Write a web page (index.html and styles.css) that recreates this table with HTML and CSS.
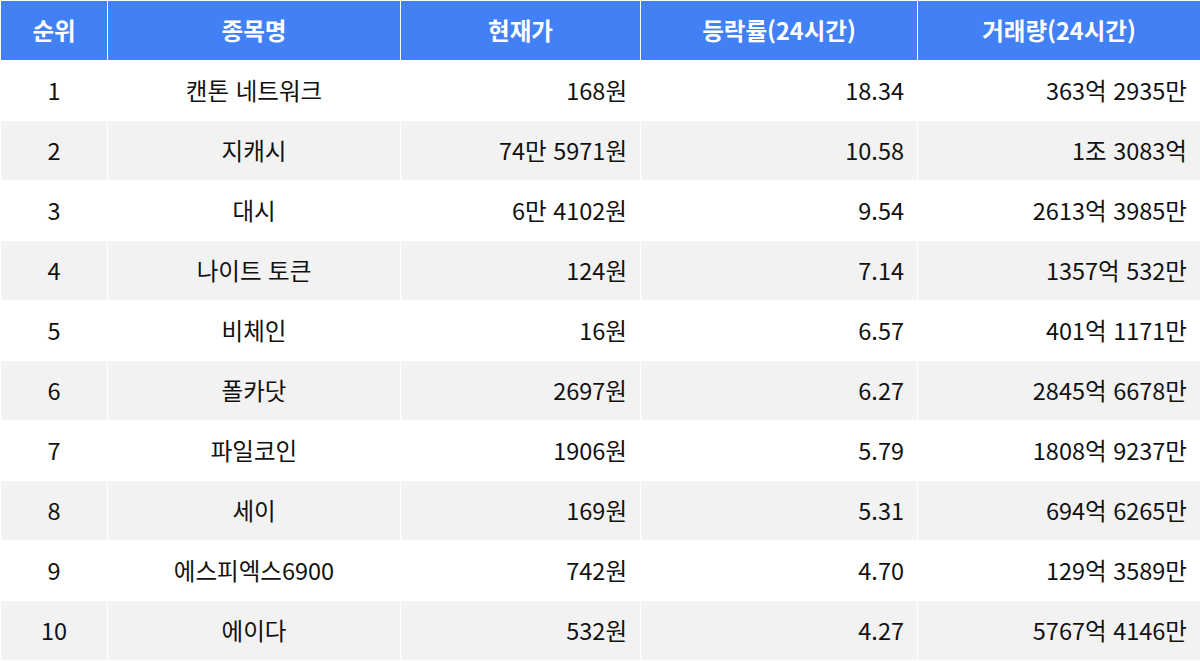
FILE: index.html
```html
<!DOCTYPE html>
<html lang="ko">
<head>
<meta charset="utf-8">
<link rel="stylesheet" href="styles.css">
</head>
<body>
<table class="rank">
  <colgroup>
    <col class="c1"><col class="c2"><col class="c3"><col class="c4"><col class="c5">
  </colgroup>
  <thead>
    <tr><th>순위</th><th>종목명</th><th>현재가</th><th>등락률(24시간)</th><th>거래량(24시간)</th></tr>
  </thead>
  <tbody>
    <tr><td class="ctr">1</td><td class="ctr">캔톤 네트워크</td><td class="num">168원</td><td class="num">18.34</td><td class="num">363억 2935만</td></tr>
    <tr><td class="ctr">2</td><td class="ctr">지캐시</td><td class="num">74만 5971원</td><td class="num">10.58</td><td class="num">1조 3083억</td></tr>
    <tr><td class="ctr">3</td><td class="ctr">대시</td><td class="num">6만 4102원</td><td class="num">9.54</td><td class="num">2613억 3985만</td></tr>
    <tr><td class="ctr">4</td><td class="ctr">나이트 토큰</td><td class="num">124원</td><td class="num">7.14</td><td class="num">1357억 532만</td></tr>
    <tr><td class="ctr">5</td><td class="ctr">비체인</td><td class="num">16원</td><td class="num">6.57</td><td class="num">401억 1171만</td></tr>
    <tr><td class="ctr">6</td><td class="ctr">폴카닷</td><td class="num">2697원</td><td class="num">6.27</td><td class="num">2845억 6678만</td></tr>
    <tr><td class="ctr">7</td><td class="ctr">파일코인</td><td class="num">1906원</td><td class="num">5.79</td><td class="num">1808억 9237만</td></tr>
    <tr><td class="ctr">8</td><td class="ctr">세이</td><td class="num">169원</td><td class="num">5.31</td><td class="num">694억 6265만</td></tr>
    <tr><td class="ctr">9</td><td class="ctr">에스피엑스6900</td><td class="num">742원</td><td class="num">4.70</td><td class="num">129억 3589만</td></tr>
    <tr><td class="ctr">10</td><td class="ctr">에이다</td><td class="num">532원</td><td class="num">4.27</td><td class="num">5767억 4146만</td></tr>
  </tbody>
</table>
</body>
</html>
```
FILE: styles.css
```css
html, body {
  margin: 0;
  padding: 0;
  background: #ffffff;
}
body {
  font-family: "Noto Sans CJK KR", "Noto Sans", sans-serif;
  color: #111111;
}
.rank {
  width: 1200px;
  border-collapse: collapse;
  table-layout: fixed;
  border: 1px solid #ffffff;
}
.c1 { width: 107px; }
.c2 { width: 293px; }
.c3 { width: 240px; }
.c4 { width: 277px; }
.c5 { width: 283px; }
.rank th,
.rank td {
  height: 60px;
  padding: 0 13px;
  border: 1px solid #ffffff;
  font-size: 23.5px;
  line-height: 1;
  box-sizing: border-box;
}
.rank th {
  background: #4281f5;
  color: #ffffff;
  font-weight: 700;
  text-align: center;
}
.rank tbody tr:nth-child(odd) td { background: #ffffff; }
.rank tbody tr:nth-child(even) td { background: #f2f2f2; }
.rank td { font-weight: 400; }
.ctr { text-align: center; }
.num { text-align: right; }
```
